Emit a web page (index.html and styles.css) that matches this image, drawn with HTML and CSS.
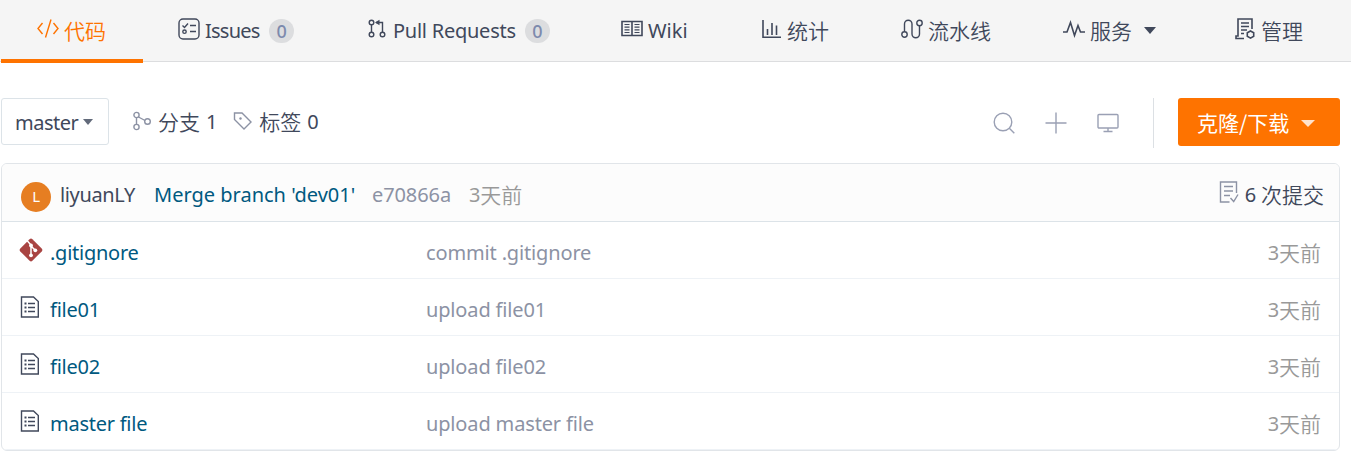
FILE: index.html
```html
<!DOCTYPE html>
<html lang="zh-CN">
<head>
<meta charset="utf-8">
<title>代码</title>
<link rel="stylesheet" href="styles.css">
</head>
<body>
<nav class="tabs">
  <a class="tab tab-code active"><svg class="icon" width="22" height="20" viewBox="0 0 22 20"><path d="M5.500 4L1 9.500l4.500 5.500M16.500 4L21 9.500l-4.500 5.500M14 .5L8.500 18.500"/></svg><span class="cjk">代码</span></a>
  <a class="tab tab-issues"><svg class="icon" width="22" height="22" viewBox="0 0 22 22"><rect x="1" y="1" width="20" height="20" rx="4"/><path d="M4.500 7.500l2 2 3.500-4M12 7.500h6M12 13.500h6"/><circle cx="6.500" cy="13.700" r="1.700"/></svg><span>Issues</span><b class="count">0</b></a>
  <a class="tab tab-pulls"><svg class="icon" width="18" height="20" viewBox="0 0 18 20"><circle cx="3.500" cy="3.500" r="2.300"/><circle cx="3.500" cy="15.500" r="2.300"/><circle cx="14.500" cy="15.500" r="2.300"/><path d="M3.500 5.800v7.400M14.500 13.200V3.500H8"/><path class="solid" d="M11.500 .8v5.400L7 3.500z"/></svg><span>Pull Requests</span><b class="count">0</b></a>
  <a class="tab tab-wiki"><svg class="icon bold" width="22" height="18" viewBox="0 0 22 18"><path d="M1 1.500h20v14H1zM11 1.500v14"/><path class="fine" d="M3.500 4.500h5M3.500 7.200h5M3.500 9.900h5M3.500 12.500h5M13.500 4.500h5M13.500 7.200h5M13.500 9.900h5M13.500 12.500h5"/></svg><span>Wiki</span></a>
  <a class="tab tab-stats"><svg class="icon bold" width="19" height="20" viewBox="0 0 19 20"><path d="M1 1v17.300h18M5.500 10v6M10 4v12M14.500 6.500v9.500"/></svg><span class="cjk">统计</span></a>
  <a class="tab tab-pipe"><svg class="icon" width="22" height="20" viewBox="0 0 22 20"><circle cx="3.500" cy="15.500" r="2.700"/><circle cx="18.500" cy="4" r="2.700"/><path d="M3.500 12.800V5a3.700 3.700 0 0 1 7.500 0v10a3.700 3.700 0 0 0 7.500 0V6.700"/></svg><span class="cjk">流水线</span></a>
  <a class="tab tab-service"><svg class="icon bold" width="22" height="18" viewBox="0 0 22 18"><path d="M0 12h4L7.500 2.500l4 13 3.500-10 2.500 6.500H22"/></svg><span class="cjk">服务</span><i class="caret"></i></a>
  <a class="tab tab-admin"><svg class="icon bold" width="20" height="22" viewBox="0 0 20 22"><path d="M9 20.500H1V18h2V1h14v10M6 5h8M6 8.500h8M6 12h6M6 15.500h3"/><path d="M15.500 13l3.200 1.800v3.500l-3.200 1.800-3.200-1.800v-3.500z"/></svg><span class="cjk">管理</span></a>
</nav>

<main>
  <section class="toolbar">
    <button class="branch"><span>master</span><i class="caret"></i></button>
    <a class="ref ref-branch"><svg class="icon" width="18" height="20" viewBox="0 0 18 20"><circle cx="3.500" cy="4" r="2.600"/><circle cx="3.500" cy="16" r="2.600"/><circle cx="14.500" cy="10.500" r="2.800"/><path d="M3.500 6.600v6.800M5.500 6l6.500 3.500"/></svg><span class="cjk">分支</span><span>1</span></a>
    <a class="ref ref-tag"><svg class="icon" width="20" height="20" viewBox="0 0 20 20"><path d="M1.500 2h7.500l9 9-7 7-9.500-9.500z"/><circle class="solid" cx="7.500" cy="7.500" r="1.200"/></svg><span class="cjk">标签</span><span>0</span></a>
    <div class="tools">
      <svg class="icon" width="24" height="24" viewBox="0 0 24 24"><circle cx="11" cy="11" r="8.800"/><path d="M17.300 17.300l5 5"/></svg>
      <svg class="icon" width="24" height="24" viewBox="0 0 24 24"><path d="M12 1.500v21M1.500 12h21"/></svg>
      <svg class="icon" width="24" height="24" viewBox="0 0 24 24"><rect x="2" y="3.500" width="20" height="13.500" rx="1"/><path d="M12 17v3.500M7.500 20.500h9"/></svg>
    </div>
    <button class="clone"><span class="cjk">克隆/下载</span><i class="caret"></i></button>
  </section>

  <section class="files">
    <header class="commit">
      <span class="avatar">L</span>
      <span class="author">liyuanLY</span>
      <a class="message">Merge branch 'dev01'</a>
      <span class="sha">e70866a</span>
      <span class="age">3<span class="cjk">天前</span></span>
      <a class="total"><svg class="icon" width="20" height="24" viewBox="0 0 20 24"><path d="M17.500 13V2h-16v20h9M5 6.500h9M5 11h9M5 15.500h6M11.500 18l3.200 3.500 4.300-7"/></svg><span>6</span><span class="cjk">次提交</span></a>
    </header>
    <div class="row">
      <svg class="git" width="24" height="24" viewBox="0 0 24 24"><path d="M10.600 1.300a2 2 0 0 1 2.800 0l9.300 9.300a2 2 0 0 1 0 2.800l-9.300 9.300a2 2 0 0 1-2.800 0l-9.300-9.300a2 2 0 0 1 0-2.800z"/><path class="mark" d="M8 2.500l4 4.500v10M12 8l4.500 4.500"/><g class="dots"><circle cx="12" cy="7.500" r="1.900"/><circle cx="12" cy="17.300" r="1.900"/><circle cx="16.300" cy="12.300" r="1.900"/></g></svg>
      <a class="name">.gitignore</a><span class="note">commit .gitignore</span><span class="age">3<span class="cjk">天前</span></span>
    </div>
    <div class="row">
      <svg class="doc" width="24" height="24" viewBox="0 0 24 24"><path d="M2.500 2h12L19.300 6.500v15.500H2.500zM9 8.500h7M9 12.500h7M9 16.500h7"/><path class="bullets" d="M5.500 8.500h2M5.500 12.500h2M5.500 16.500h2"/></svg>
      <a class="name">file01</a><span class="note">upload file01</span><span class="age">3<span class="cjk">天前</span></span>
    </div>
    <div class="row">
      <svg class="doc" width="24" height="24" viewBox="0 0 24 24"><path d="M2.500 2h12L19.300 6.500v15.500H2.500zM9 8.500h7M9 12.500h7M9 16.500h7"/><path class="bullets" d="M5.500 8.500h2M5.500 12.500h2M5.500 16.500h2"/></svg>
      <a class="name">file02</a><span class="note">upload file02</span><span class="age">3<span class="cjk">天前</span></span>
    </div>
    <div class="row">
      <svg class="doc" width="24" height="24" viewBox="0 0 24 24"><path d="M2.500 2h12L19.300 6.500v15.500H2.500zM9 8.500h7M9 12.500h7M9 16.500h7"/><path class="bullets" d="M5.500 8.500h2M5.500 12.500h2M5.500 16.500h2"/></svg>
      <a class="name">master file</a><span class="note">upload master file</span><span class="age">3<span class="cjk">天前</span></span>
    </div>
  </section>
</main>
</body>
</html>
```
FILE: styles.css
```css
* { box-sizing: border-box; }
body {
  margin: 0;
  background: #fff;
  color: #40485b;
  font: 20px/28px "Noto Sans", "Noto Sans CJK SC", sans-serif;
  letter-spacing: -0.25px;
}
svg { flex: none; fill: none; stroke: currentColor; stroke-width: 1.4; }
.bold { stroke-width: 1.6; }
.fine { stroke-width: 1.2; }
.solid { fill: currentColor; stroke: none; }
.cjk { font-family: "Noto Sans CJK SC", sans-serif; font-size: 21px; font-weight: 350; letter-spacing: 0; }
.tab .cjk, .ref .cjk, .clone .cjk, .total .cjk { padding-bottom: 2px; }
.caret { flex: none; border: 6px solid transparent; border-top: 7px solid currentColor; border-bottom: 0; }
button { font: inherit; color: inherit; letter-spacing: inherit; display: flex; align-items: center; border: 0; }

.tabs { display: flex; height: 62px; padding-left: 1px; background: #f5f5f5; border-bottom: 1px solid #dcdddf; }
.tab { display: flex; align-items: center; height: 61px; padding-left: 36px; white-space: nowrap; }
.tab .icon { margin: -4px 5px 0 0; }
.tab-code { width: 142px; }
.tab.active { height: 63px; border-bottom: 4px solid #fe7300; color: #fe7300; padding-top: 2px; }
.tab-issues { width: 189px; padding-left: 35px; letter-spacing: -0.75px; }
.tab-pulls { width: 253px; }
.tab-pulls .icon { margin-right: 7px; }
.tab-wiki { width: 141px; letter-spacing: 0; }
.tab-stats { width: 139px; }
.tab-stats .icon { margin-right: 6px; }
.tab-pipe { width: 162px; }
.tab-service { width: 172px; }
.tab-service .caret { margin-left: 12px; }
.tab-admin .icon { margin-right: 6px; }
.count {
  width: 25px; height: 24px; margin-left: 9px; border-radius: 12px;
  background: #dcdddf; color: #7d8aad;
  font-size: 18px; font-weight: 500; line-height: 24px; text-align: center;
}

main { padding: 36px 11px 0 1px; }
.toolbar { display: flex; height: 65px; }
.branch { width: 108px; height: 47px; padding: 2px 0 0 13px; background: #fff; border: 1px solid #dce3e8; border-radius: 3px; letter-spacing: -0.5px; }
.branch .caret { margin: -2px 0 0 5px; border-width: 6px 5.5px 0; color: #626a7a; }
.ref { display: flex; align-items: center; height: 48px; }
.ref .icon { color: #8c92a4; margin: -2px 7px 0 0; }
.ref-branch { margin-left: 24px; }
.ref span + span { margin-left: 6px; }
.ref-tag { margin-left: 16px; }
.ref-tag .icon { margin-right: 6px; }
.tools { display: flex; align-items: center; gap: 28px; height: 50px; margin-left: auto; padding-right: 33px; border-right: 1px solid #dce0e4; color: #9aa0b4; }
.clone { width: 162px; height: 48px; margin-left: 24px; padding: 2px 0 0 19px; border-radius: 3px; background: #fe7300; color: #fff; }
.clone .cjk { font-weight: 400; }
.clone .caret { margin-left: 12px; border-width: 7px 7px 0; color: #ffe2cc; }

.files { border: 1px solid #e1e5e9; border-radius: 6px; overflow: hidden; }
.commit { display: flex; align-items: center; height: 58px; padding: 4px 15px 0 19px; background: #fcfcfc; border-bottom: 1px solid #dce3e8; }
.avatar { width: 30px; height: 30px; margin-top: 4px; border-radius: 50%; background: #e67e22; color: #fff; font-size: 15px; line-height: 29px; text-align: center; }
.author { width: 94px; margin-left: 9px; letter-spacing: -0.35px; }
.message { width: 218px; letter-spacing: 0; }
.sha { width: 97px; color: #8c92a4; letter-spacing: -0.1px; }
.message, .name { color: #005980; }
.age { display: flex; color: #999; white-space: nowrap; }
.age .cjk { margin-top: -1px; }
.total { display: flex; align-items: center; margin-left: auto; }
.total .icon { color: #8c92a4; margin: -6px 6px 0 0; }
.total .cjk { margin-left: 5px; }
.row { display: flex; align-items: center; height: 57px; padding: 5px 18px 0 17px; border-bottom: 1px solid #eef2f6; }
.row svg { margin: -5px 7px 0 0; }
.row .age { margin-left: auto; }
.name { width: 376px; }
.note { color: #8c92a4; letter-spacing: -0.15px; }
.git { fill: #a94442; stroke: none; }
.mark { fill: none; stroke: #fff; stroke-width: 1.5; }
.dots { fill: #fff; }
.doc { color: #40485b; }
.bullets { stroke-width: 2; }
```
